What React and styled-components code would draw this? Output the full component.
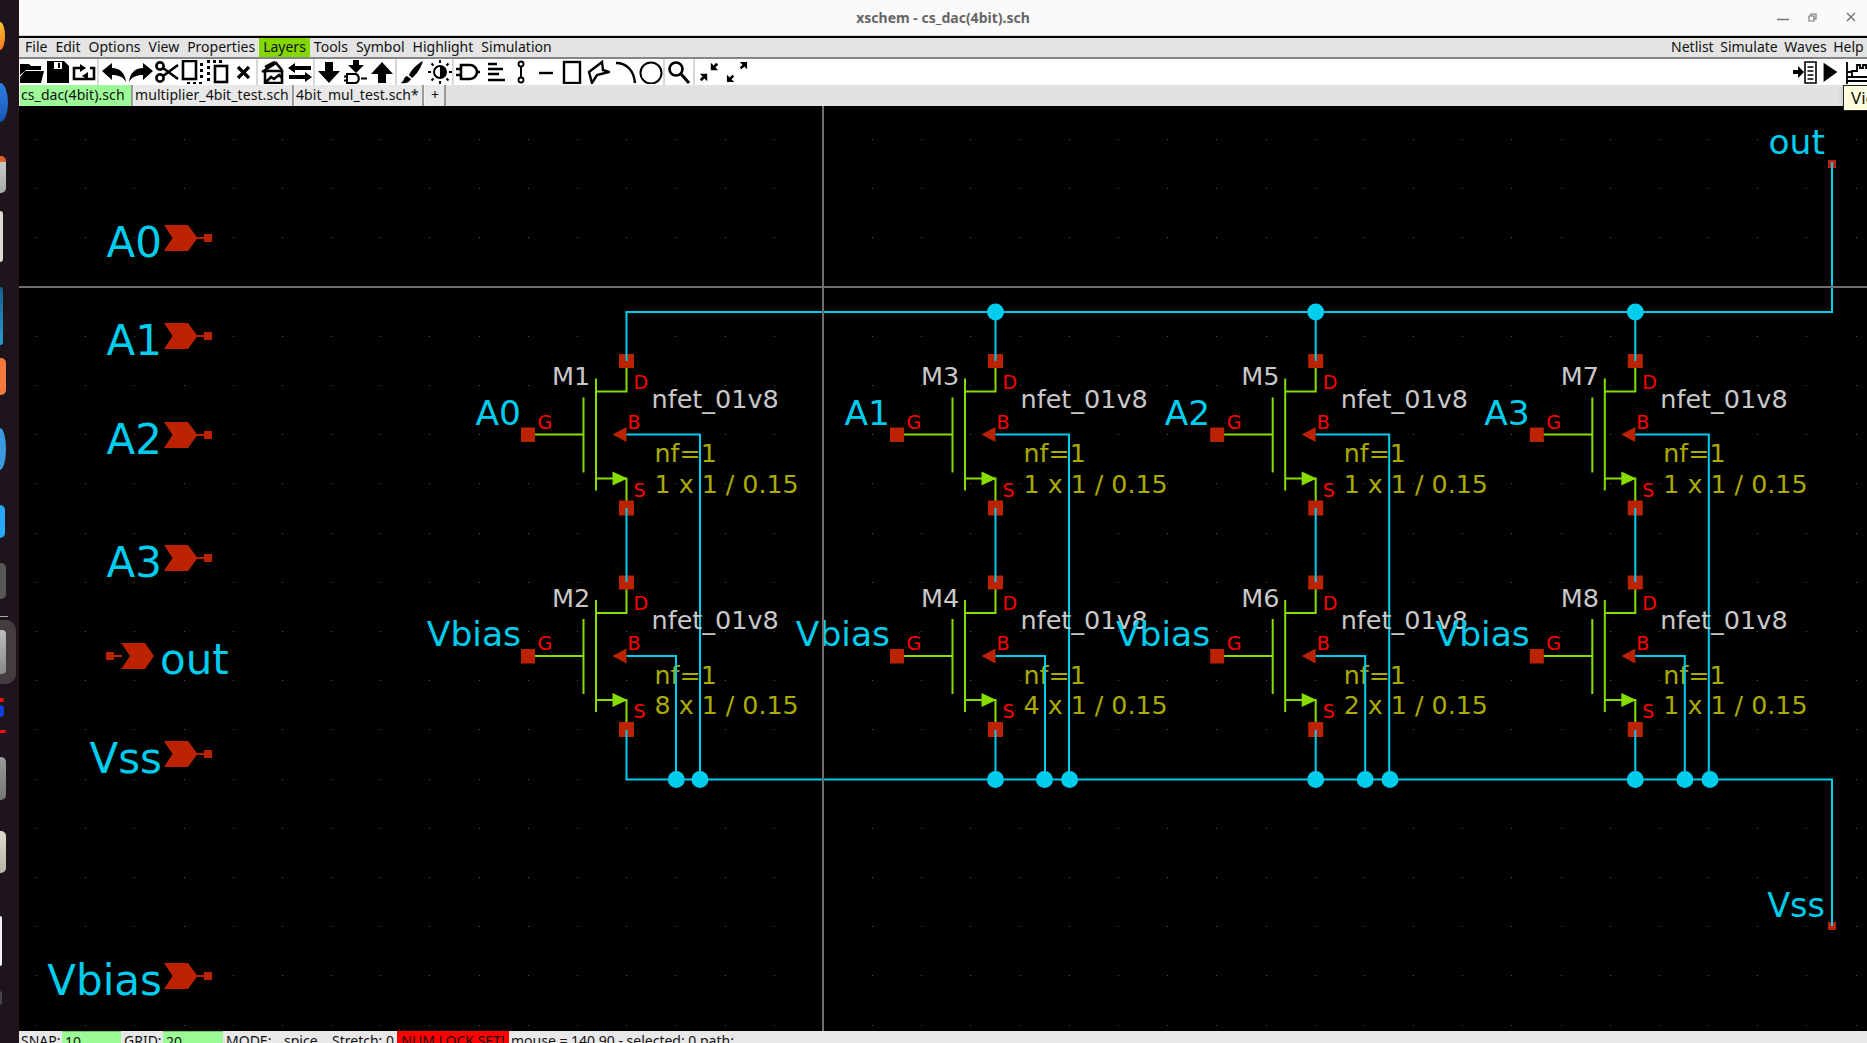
import React from "react"
import styled, { createGlobalStyle } from "styled-components"

const Global = createGlobalStyle`
  html, body { margin: 0; padding: 0; background: #000; }
  #root { height: 100vh; overflow: hidden; }
`

const UI_FONT = `"Noto Sans", "Open Sans", sans-serif`
const CAD_FONT = `"DejaVu Sans", sans-serif`

const Screen = styled.div`
  display: flex;
  height: 1043px;
  width: 1867px;
  overflow: hidden;
  font-family: ${UI_FONT};
`

/* launcher on the left, only its right edge is on screen */
const Dock = styled.div`
  flex: 0 0 19px;
  background: #1e151c;
  display: flex;
  flex-direction: column;
  align-items: flex-start;
`
const Sliver = styled.div`
  flex: 0 0 auto;
  width: ${p => p.$w}px;
  height: ${p => p.$h}px;
  margin-top: ${p => p.$gap}px;
  background: ${p => p.$bg};
  border-radius: ${p => p.$round ? "0 100% 100% 0 / 0 50% 50% 0" : "0 5px 5px 0"};
`
const ActivePad = styled.div`
  flex: 0 0 64px;
  width: 16px;
  margin-top: 3px;
  background: #443c40;
  border-radius: 0 10px 10px 0;
  padding-top: 10px;
  box-sizing: border-box;
`
const PadIcon = styled.div`
  width: 6px;
  height: 44px;
  background: linear-gradient(#bdbdbd, #8a8a8a);
  border-radius: 0 4px 4px 0;
`

const Main = styled.div`
  flex: 1;
  min-width: 0;
  display: flex;
  flex-direction: column;
  position: relative;
`

const TitleBar = styled.div`
  flex: 0 0 35px;
  background: #fafafa;
  border-bottom: 1px solid #d6d6d6;
  display: flex;
  align-items: center;
  justify-content: center;
  position: relative;
  font-size: 14px;
  font-weight: 700;
  color: #666;
`
const WinButtons = styled.div`
  position: absolute;
  right: 0;
  top: 0;
  display: flex;
`
const WinButton = styled.svg`
  width: 38px;
  height: 35px;
  fill: none;
  stroke: #777;
  stroke-width: 1.2;
`

const MenuBar = styled.div`
  flex: 0 0 19px;
  margin-top: 2px;
  background: #e4e4e4;
  display: flex;
  font-size: 14px;
  line-height: 17px;
  color: #111;
  padding: 0 0 0 2px;
`
const MenuItem = styled.div`
  padding: 0 ${p => p.$pad ?? 4}px;
  background: ${p => p.$active ? "#86d600" : "transparent"};
`
const MenuRight = styled.div`
  margin-left: auto;
  display: flex;
`

const ToolBar = styled.div`
  flex: 0 0 26px;
  border-top: 2px solid #868686;
  background: #fff;
  display: flex;
  overflow: hidden;
`
const ToolGroup = styled.div`
  display: flex;
  flex-shrink: 0;
  border-right: ${p => p.$plain ? "none" : "2px solid #d8d8d8"};
`
const ToolRight = styled.div`
  margin-left: auto;
  display: flex;
  flex-shrink: 0;
  margin-right: -6px;
`
const ToolBtn = styled.div`
  width: ${p => p.$w}px;
  flex-shrink: 0;
  display: flex;
  align-items: center;
  justify-content: center;
`
const Icon = styled.svg`
  width: ${p => p.$size || 24}px;
  height: ${p => p.$size || 24}px;
  fill: #000;
  stroke-linecap: butt;
`

const TabBar = styled.div`
  flex: 0 0 21px;
  background: #e2e2e2;
  display: flex;
  font-size: 14px;
  line-height: 20px;
  letter-spacing: 0.08px;
  color: #111;
`
const Tab = styled.div`
  width: ${p => p.$w}px;
  box-sizing: border-box;
  padding-left: ${p => p.$pad ?? 1}px;
  white-space: nowrap;
  background: ${p => p.$active ? "#9dfb97" : "#e8e8e8"};
  border-right: 2px solid #9a9a9a;
  border-left: 1px solid #f4f4f4;
`

const Tooltip = styled.div`
  position: absolute;
  left: 1824px;
  top: 85px;
  width: 60px;
  height: 26px;
  box-sizing: border-box;
  background: #ffffe0;
  border: 1px solid #222;
  font-size: 17px;
  line-height: 24px;
  padding-left: 7px;
  color: #111;
  z-index: 2;
  box-shadow: -3px 0 5px rgba(0,0,0,.06);
`

const Canvas = styled.div`
  flex: 0 0 925px;
  background: #000;
`
const Sheet = styled.svg`
  display: block;
`
const Lbl = styled.text`
  font-family: ${CAD_FONT};
  font-size: ${p => p.$size}px;
  fill: ${p => p.$color};
`

const StatusBar = styled.div`
  flex: 0 0 20px;
  background: #e8e8e8;
  display: flex;
  font-size: 14px;
  line-height: 20px;
  color: #111;
  padding-top: 0;
  white-space: nowrap;
`
const StatusText = styled.div`
  width: ${p => p.$w}px;
  padding-left: ${p => p.$pad ?? 2}px;
  box-sizing: border-box;
`
const StatusInput = styled.div`
  width: ${p => p.$w}px;
  box-sizing: border-box;
  padding-left: 3px;
  background: #9dfb97;
  border-top: 1px solid #6ec46a;
`
const StatusAlert = styled.div`
  width: 112px;
  text-align: center;
  background: #ff0000;
  color: #111;
`

/* schematic colours */
const WIRE = "#00ccee"
const PIN = "#bb2200"
const GREEN = "#88dd00"
const RED = "#ff0000"
const GREY = "#c8c8c8"
const OLIVE = "#aaaa00"

const Dots = () => {
  const d = []
  for (let i = 0; i < 38; i++) {
    for (let j = 0; j < 19; j++) {
      d.push(`M${Math.round(36 + i * 49.18)} ${Math.round(139 + j * 49.2)}h1v1h-1z`)
    }
  }
  return <path d={d.join("")} fill="#555" />
}

const Mos = ({ dx, dy, name, label, mult, bulkTo }) => {
  const x = 626.5 + dx
  const y = 434.5 + dy
  return (
    <g>
      <g stroke={GREEN} strokeWidth="2" fill="none">
        <path d={`M${x - 98} ${y}H${x - 43}M${x - 43} ${y - 37}V${y + 38}M${x - 30.5} ${y - 56}V${y + 56}M${x - 30} ${y - 43}H${x}V${y - 73}M${x - 30} ${y + 44}H${x}V${y + 74}`} />
      </g>
      <path d={`M${x - 14} ${y + 37}L${x + 1} ${y + 44}L${x - 14} ${y + 51}z`} fill={GREEN} />
      <path d={`M${x - 14} ${y}L${x} ${y - 7.5}V${y + 7.5}z`} fill={PIN} />
      <rect x={x - 7.5} y={y - 80.5} width="15" height="14" fill={PIN} />
      <rect x={x - 7.5} y={y + 66} width="15" height="15" fill={PIN} />
      <rect x={x - 105.5} y={y - 7} width="14" height="14.5" fill={PIN} />
      <Lbl $size={25.5} $color={GREY} x={x - 74.5} y={y - 49.5}>{name}</Lbl>
      <Lbl $size={25.5} $color={GREY} x={x + 25} y={y - 27}>nfet_01v8</Lbl>
      <Lbl $size={34.5} $color={WIRE} x={x - 105.5} y={y - 10} textAnchor="end">{label}</Lbl>
      <Lbl $size={19} $color={RED} x={x + 7} y={y - 46}>D</Lbl>
      <Lbl $size={19} $color={RED} x={x - 89} y={y - 6}>G</Lbl>
      <Lbl $size={19} $color={RED} x={x + 1} y={y - 6}>B</Lbl>
      <Lbl $size={19} $color={RED} x={x + 7} y={y + 62}>S</Lbl>
      <Lbl $size={25.3} $color={OLIVE} x={x + 28} y={y + 27.5}>nf=1</Lbl>
      <Lbl $size={25.3} $color={OLIVE} x={x + 28} y={y + 58}>{mult} x 1 / 0.15</Lbl>
      <path d={`M${x} ${y}H${x + bulkTo}V779.5`} stroke={WIRE} strokeWidth="2" fill="none" />
    </g>
  )
}

const InPin = ({ y, name }) => (
  <g>
    <path d={`M164 ${y - 13}H188L197.5 ${y}L188 ${y + 13}H164L172.5 ${y}z`} fill={PIN} />
    <path d={`M197 ${y - 1}h8v2h-8z`} fill={PIN} />
    <rect x="204" y={y - 4} width="8" height="8" fill={PIN} />
    <Lbl $size={42} $color={WIRE} x="162" y={y + 18.5} textAnchor="end">{name}</Lbl>
  </g>
)

const columns = [
  { dx: 0, top: ["M1", "A0"], bot: ["M2", 8] },
  { dx: 369, top: ["M3", "A1"], bot: ["M4", 4] },
  { dx: 689.2, top: ["M5", "A2"], bot: ["M6", 2] },
  { dx: 1008.8, top: ["M7", "A3"], bot: ["M8", 1] },
]

const Schematic = () => (
  <Sheet width="1848" height="925" viewBox="19 106 1848 925">
    <Dots />

    <InPin y={238} name="A0" />
    <InPin y={336} name="A1" />
    <InPin y={435} name="A2" />
    <InPin y={558} name="A3" />
    <InPin y={754} name="Vss" />
    <InPin y={976} name="Vbias" />
    <g>
      <rect x="106" y="652" width="8" height="8" fill={PIN} />
      <path d="M113 655h9v2h-9z" fill={PIN} />
      <path d="M121 643H145L154 656L145 669H121L130 656z" fill={PIN} />
      <Lbl $size={42} $color={WIRE} x="160" y="674">out</Lbl>
    </g>

    {columns.map(c => (
      <g key={c.top[0]}>
        <Mos dx={c.dx} dy={0} name={c.top[0]} label={c.top[1]} mult={1} bulkTo={73.5} />
        <Mos dx={c.dx} dy={221.5} name={c.bot[0]} label="Vbias" mult={c.bot[1]} bulkTo={49.5} />
        <path d={`M${626.5 + c.dx} 312V361M${626.5 + c.dx} 508V582M${626.5 + c.dx} 730V779`} stroke={WIRE} strokeWidth="2" fill="none" />
      </g>
    ))}

    <path d="M625.5 312H1832V164M625.5 779.5H1832V926" stroke={WIRE} strokeWidth="2" fill="none" />
    <rect x="1828" y="160" width="8" height="8" fill={PIN} />
    <rect x="1828" y="922" width="8" height="8" fill={PIN} />
    <path d="M1831 162h2v150h-2zM1831 779h2v147h-2z" fill={WIRE} />

    {[995.5, 1315.7, 1635.3].map(x => <circle key={x} cx={x} cy="312" r="8.5" fill={WIRE} />)}
    {[676.3, 700, 995.5, 1044.5, 1069.6, 1315.7, 1365.2, 1390, 1635.3, 1684.9, 1710].map(x => (
      <circle key={x} cx={x} cy="779.5" r="8.5" fill={WIRE} />
    ))}

    <Lbl $size={34.5} $color={WIRE} x="1825" y="154" textAnchor="end">out</Lbl>
    <Lbl $size={33.5} $color={WIRE} x="1825" y="917" textAnchor="end">Vss</Lbl>

    {/* crosshair */}
    <path d="M823 106V1031M19 287H1867" stroke="#6e6e6e" strokeWidth="2" />
  </Sheet>
)

const I = ({ size, children }) => <Icon $size={size} viewBox="0 0 24 24">{children}</Icon>
const line = { fill: "none", stroke: "#000", strokeWidth: 2.6 }

const tools = {
  open: <><path d="M0 4h9l2 2h10v4H6L0 15z" /><path d="M0 23V17l5-6h19l-3 12z" /></>,
  save: <><path d="M1 1h17l5 5v17H1z" /><path d="M8 2h8v7H8z" fill="#fff" /><path d="M12 3h2v5h-2z" /></>,
  reload: <><path d="M9 8H2v11h20V8h-4" {...line} /><path d="M8 4l6 4-6 4zM16 20l-6-4 6-4z" /></>,
  undo: <path d="M0 11L10 3v5c8 0 13 5 14 14-3-5-7-7-14-7v5z" />,
  redo: <path d="M24 11L14 3v5C6 8 1 13 0 22c3-5 7-7 14-7v5z" />,
  cut: <><circle cx="5" cy="6" r="3.6" {...line} /><circle cx="5" cy="18" r="3.6" {...line} /><path d="M8 8l15 11M8 16L23 5" {...line} /></>,
  copy: <><rect x="2" y="1" width="13" height="18" {...line} /><path d="M19 3h3v3h-3zM19 9h3v3h-3zM19 15h3v3h-3zM6 22h3v2H6zM12 22h3v2h-3zM18 22h3v2h-3z" /></>,
  move: <><rect x="9" y="6" width="12" height="16" {...line} /><path d="M1 0h3v3H1zM7 0h3v3H7zM13 0h3v3h-3zM1 6h3v3H1zM1 12h3v3H1zM1 18h3v3H1z" /></>,
  del: <path d="M7 7l11 11M18 7L7 18" fill="none" stroke="#000" strokeWidth="3.2" />,
  load: <><path d="M1 12L15 3l6 7M4 7l10-5" {...line} /><path d="M4 11h17v12H4zM4 23l6-6 3 2 5-4 3 3" {...line} /></>,
  swap: <><path d="M0 8l7-5v3h16v4H7v3z" /><path d="M24 17l-7-5v3H1v4h16v3z" /></>,
  down: <path d="M8 2h8v9h7L12 23 1 11h7z" />,
  up: <path d="M8 23h8v-9h7L12 2 1 14h7z" />,
  descend: <><path d="M9 0h6v5h5l-8 8-8-8h5z" /><path d="M3 14h9a5 5 0 0 1 0 9H3zM0 16.5h3M0 20.5h3M17 18.5h6" {...line} strokeWidth="2" /></>,
  brush: <><path d="M23 1C17 4 11 10 9 15l3 3c4-3 9-10 11-17z" /><path d="M7 16c-3 1-3 4-4 5l-2 2c4 1 8 0 10-4z" /></>,
  bright: <><circle cx="12" cy="12" r="6" {...line} strokeWidth="2" /><path d="M12 6a6 6 0 0 1 0 12z" /><path d="M12 0v3M12 21v3M0 12h3M21 12h3M3.5 3.5l2 2M18.5 18.5l2 2M3.5 20.5l2-2M18.5 5.5l2-2" {...line} strokeWidth="2" /></>,
  gate: <path d="M5 5h9a7 7 0 0 1 0 14H5zM0 9h5M0 15h5M20 12h4" {...line} />,
  align: <path d="M5 4h9M5 9h15M5 14h11M5 20h17" {...line} />,
  wire: <><path d="M12 6v12" {...line} strokeWidth="2" /><circle cx="12" cy="4" r="2.5" {...line} strokeWidth="1.8" /><circle cx="12" cy="20" r="2.5" {...line} strokeWidth="1.8" /></>,
  dash: <path d="M5 13h14" {...line} strokeWidth="2.4" />,
  rect: <rect x="4" y="2" width="16" height="21" {...line} strokeWidth="2.4" />,
  poly: <path d="M3 12L16 2l1 8 6 2-12 3-5 8z" {...line} strokeWidth="2.4" />,
  arc: <path d="M3 3c11 0 18 8 19 20" {...line} strokeWidth="2.4" />,
  circle: <circle cx="12" cy="13" r="10.5" {...line} strokeWidth="2" />,
  search: <><circle cx="9" cy="9" r="6.5" {...line} /><path d="M14 14l8 9" {...line} strokeWidth="3" /></>,
  shrink: <path d="M14 2v8h8l-3-3 3-3-2-2-3 3zM2 14h8v8l-3-3-3 3-2-2 3-3z" />,
  expand: <path d="M15 1h8v8l-3-3-3 3-2-2 3-3zM1 15v8h8l-3-3 3-3-2-2-3 3z" />,
  netlist: <><path d="M0 10h5V6l6 6-6 6v-4H0z" /><path d="M12 2h11v21H12zM14.5 7h6M14.5 11h6M14.5 15h6M14.5 19h6" {...line} strokeWidth="1.6" /></>,
  play: <path d="M5 2l15 10L5 23z" />,
  waves: <path d="M1 24V2M0 21h24M1 17h5v-6h5v-6h3v3h3V5h3v3h3V5M1 12h5M6 17h18" {...line} strokeWidth="1.8" />,
}

const groups = [
  [["open", 26], ["save", 25], ["reload", 27]],
  [["undo", 29], ["redo", 26], ["cut", 26], ["copy", 25], ["move", 25], ["del", 26]],
  [["load", 29], ["swap", 26]],
  [["down", 28], ["descend", 26], ["up", 26]],
  [["brush", 30], ["bright", 25]],
  [["gate", 28], ["align", 26], ["wire", 25], ["dash", 26], ["rect", 26], ["poly", 26], ["arc", 27], ["circle", 25]],
  [["search", 28]],
]

const menus = ["File", "Edit", "Options", "View", "Properties", "Layers", "Tools", "Symbol", "Highlight", "Simulation"]

export default function App() {
  return (
    <Screen>
      <Global />
      <Dock>
        <Sliver $w={5} $h={28} $gap={22} $bg="linear-gradient(#ffc02e,#f0791e)" $round />
        <Sliver $w={8} $h={39} $gap={33} $bg="linear-gradient(#2f7fe0,#1556b8)" $round />
        <Sliver $w={6} $h={37} $gap={34} $bg="linear-gradient(#d9622b 15%,#c8c8c8 15%,#aaa)" />
        <Sliver $w={3} $h={51} $gap={18} $bg="#ddd9d0" />
        <Sliver $w={3} $h={58} $gap={25} $bg="linear-gradient(#14608e,#2a9ad0)" />
        <Sliver $w={6} $h={37} $gap={13} $bg="#f47a3c" />
        <Sliver $w={6} $h={42} $gap={33} $bg="#3a9ae0" $round />
        <Sliver $w={5} $h={33} $gap={35} $bg="#28a8f8" />
        <Sliver $w={6} $h={36} $gap={25} $bg="#565654" />
        <Sliver $w={8} $h={1} $gap={17} $bg="#aaa" />
        <ActivePad><PadIcon /></ActivePad>
        <Sliver $w={4} $h={4} $gap={14} $bg="#f01010" />
        <Sliver $w={4} $h={12} $gap={3} $bg="#1040e0" />
        <Sliver $w={6} $h={3} $gap={13} $bg="#f01010" />
        <Sliver $w={6} $h={43} $gap={24} $bg="linear-gradient(#9a9a9a,#777)" />
        <Sliver $w={6} $h={42} $gap={31} $bg="linear-gradient(#ddd9cc,#b8b4a4)" />
        <Sliver $w={2} $h={50} $gap={43} $bg="#f2f2f2" />
        <Sliver $w={2} $h={14} $gap={25} $bg="#444" />
      </Dock>

      <Main>
        <TitleBar>
          xschem - cs_dac(4bit).sch
          <WinButtons>
            <WinButton viewBox="0 0 38 35"><path d="M24 19.5h12" strokeWidth="1.5" /></WinButton>
            <WinButton viewBox="0 0 38 35"><path d="M18 16h5v5h-5zM20 16v-2h5v5h-2" /></WinButton>
            <WinButton viewBox="0 0 38 35"><path d="M18 13l8 8M26 13l-8 8" strokeWidth="1.5" /></WinButton>
          </WinButtons>
        </TitleBar>

        <MenuBar>
          {menus.map(m => <MenuItem key={m} $active={m === "Layers"}>{m}</MenuItem>)}
          <MenuRight>
            {["Netlist", "Simulate", "Waves", "Help"].map(m => <MenuItem key={m} $pad={3.3}>{m}</MenuItem>)}
          </MenuRight>
        </MenuBar>

        <ToolBar>
          {groups.map((g, i) => (
            <ToolGroup key={i}>
              {g.map(([n, w]) => <ToolBtn key={n} $w={w}><I>{tools[n]}</I></ToolBtn>)}
            </ToolGroup>
          ))}
          <ToolGroup $plain>
            <ToolBtn $w={28}><I size={22}>{tools.shrink}</I></ToolBtn>
            <ToolBtn $w={28}><I size={22}>{tools.expand}</I></ToolBtn>
          </ToolGroup>
          <ToolRight>
            <ToolBtn $w={25}><I>{tools.netlist}</I></ToolBtn>
            <ToolBtn $w={26}><I size={22}>{tools.play}</I></ToolBtn>
            <ToolBtn $w={30}><I>{tools.waves}</I></ToolBtn>
          </ToolRight>
        </ToolBar>

        <TabBar>
          <Tab $active $w={114}>cs_dac(4bit).sch</Tab>
          <Tab $w={161}>multiplier_4bit_test.sch</Tab>
          <Tab $w={130}>4bit_mul_test.sch*</Tab>
          <Tab $w={22} $pad={6}>+</Tab>
        </TabBar>

        <Tooltip>View</Tooltip>

        <Canvas><Schematic /></Canvas>

        <StatusBar>
          <StatusText $w={43}>SNAP:</StatusText>
          <StatusInput $w={59}>10</StatusInput>
          <StatusText $w={42} $pad={3}>GRID:</StatusText>
          <StatusInput $w={60}>20</StatusInput>
          <StatusText $w={59} $pad={3}>MODE:</StatusText>
          <StatusText $w={47}>spice</StatusText>
          <StatusText $w={68} $pad={3}>Stretch: 0</StatusText>
          <StatusAlert>NUM LOCK SET!</StatusAlert>
          <StatusText $w={400} $pad={2}>mouse = 140 90 - selected: 0 path:</StatusText>
        </StatusBar>
      </Main>
    </Screen>
  )
}
